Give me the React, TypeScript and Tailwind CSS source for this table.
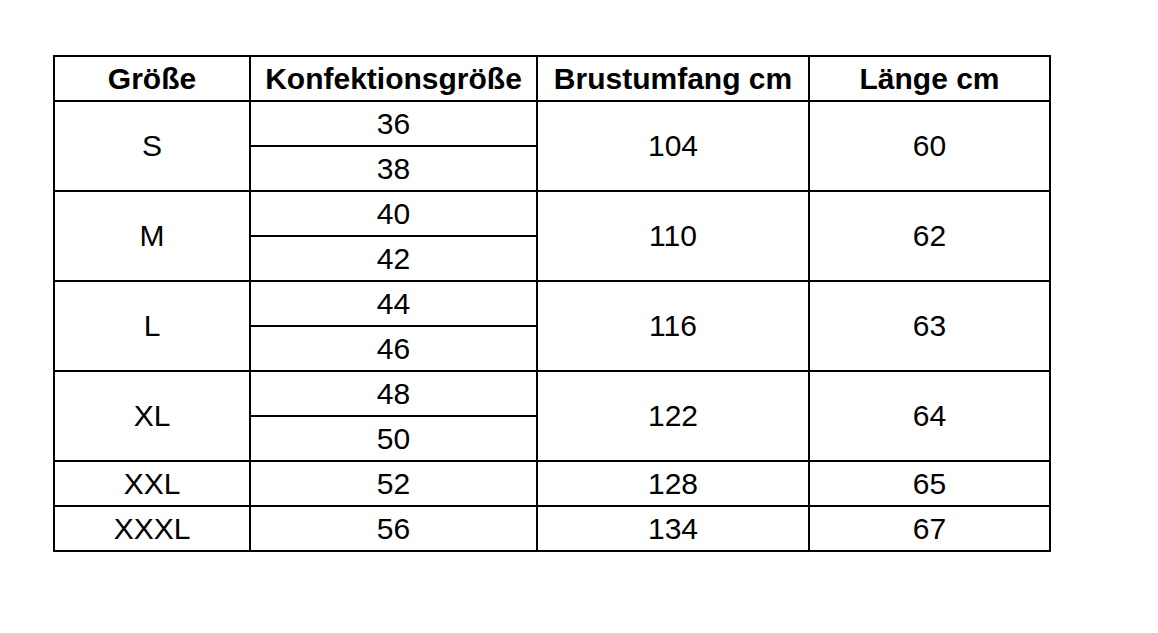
import React from 'react';

type Group = { size: string; konf: string[]; brust: string; laenge: string };

const groups: Group[] = [
  { size: 'S', konf: ['36', '38'], brust: '104', laenge: '60' },
  { size: 'M', konf: ['40', '42'], brust: '110', laenge: '62' },
  { size: 'L', konf: ['44', '46'], brust: '116', laenge: '63' },
  { size: 'XL', konf: ['48', '50'], brust: '122', laenge: '64' },
  { size: 'XXL', konf: ['52'], brust: '128', laenge: '65' },
  { size: 'XXXL', konf: ['56'], brust: '134', laenge: '67' },
];

const cell = 'border-2 border-black p-0 text-center align-middle';

const App: React.FC = () => {
  return (
    <div className="min-h-screen bg-white pl-[53px] pt-[55px] font-['Liberation_Sans',Arial,sans-serif] text-black">
      <table className="w-[998px] table-fixed border-collapse text-[30px] leading-none">
        <colgroup>
          <col className="w-[196px]" />
          <col className="w-[287px]" />
          <col className="w-[272px]" />
          <col className="w-[241px]" />
        </colgroup>
        <thead>
          <tr className="h-[45px]">
            <th className={`${cell} font-bold`}>Größe</th>
            <th className={`${cell} font-bold`}>Konfektionsgröße</th>
            <th className={`${cell} font-bold`}>Brustumfang cm</th>
            <th className={`${cell} font-bold`}>Länge cm</th>
          </tr>
        </thead>
        <tbody>
          {groups.map((g) =>
            g.konf.map((k, i) => (
              <tr key={g.size + k} className="h-[45px]">
                {i === 0 && (
                  <td rowSpan={g.konf.length} className={cell}>
                    {g.size}
                  </td>
                )}
                <td className={cell}>{k}</td>
                {i === 0 && (
                  <>
                    <td rowSpan={g.konf.length} className={cell}>
                      {g.brust}
                    </td>
                    <td rowSpan={g.konf.length} className={cell}>
                      {g.laenge}
                    </td>
                  </>
                )}
              </tr>
            ))
          )}
        </tbody>
      </table>
    </div>
  );
};

export default App;
